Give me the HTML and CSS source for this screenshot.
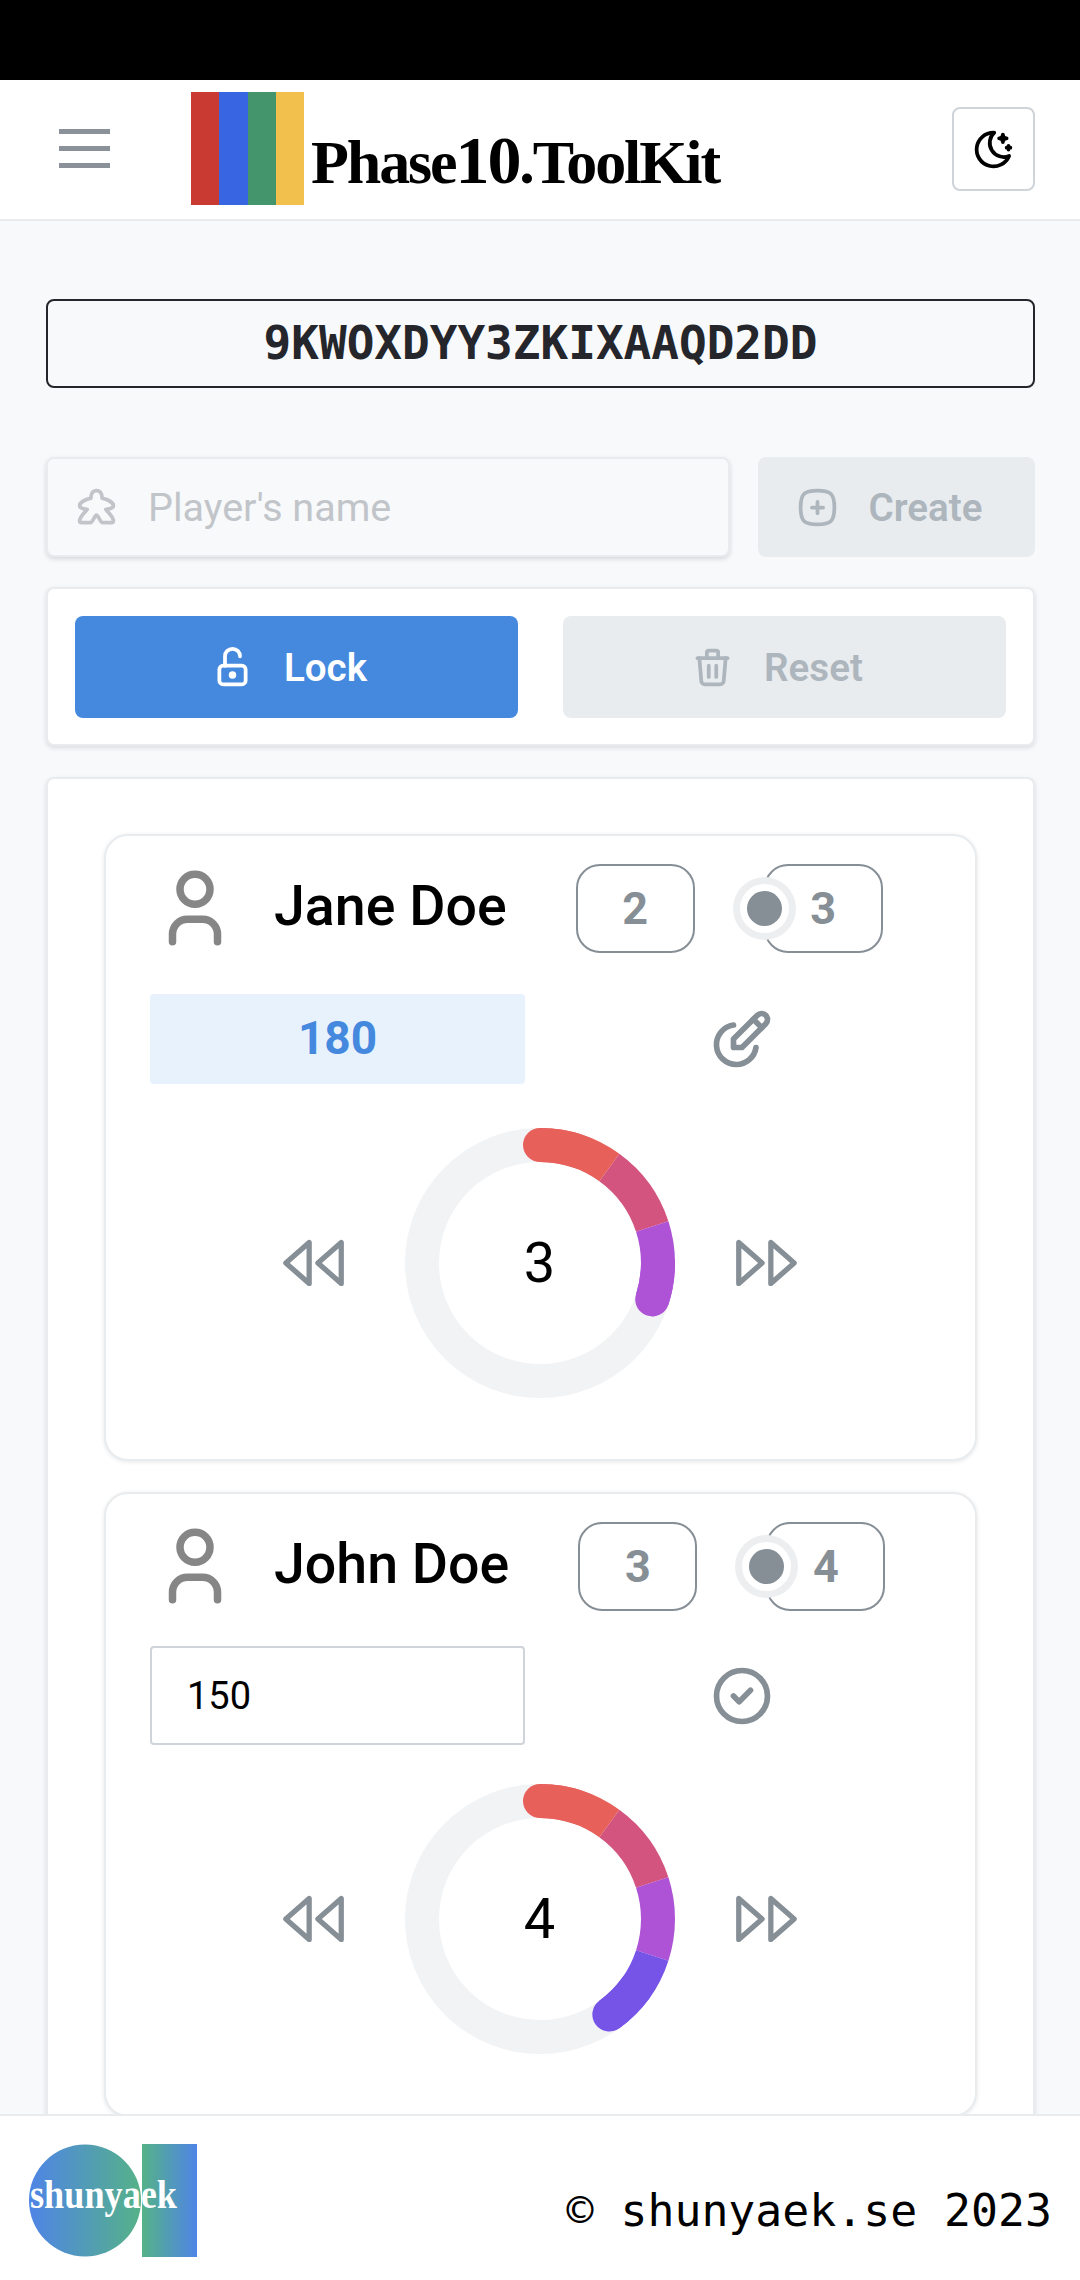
FILE: index.html
```html
<!DOCTYPE html>
<html lang="en">
<head>
    <meta charset="UTF-8">
    <meta name="viewport" content="width=device-width, initial-scale=1.0">
    <title>Phase10.ToolKit</title>
    <link rel="stylesheet" href="styles.css">
</head>
<body>
    <div class="statusbar"></div>

    <header class="header">
        <div class="burger"><span></span><span></span><span></span></div>
        <div class="logo">
            <div class="logo-bars"><i class="bar-red"></i><i class="bar-blue"></i><i class="bar-green"></i><i class="bar-yellow"></i></div>
            <div class="logo-text">Phase<b>10</b>.ToolKit</div>
        </div>
        <button class="theme-btn">
            <svg class="icon" width="45" height="45" viewBox="0 0 24 24"><path d="M12 3c.132 0 .263 0 .393 0a7.5 7.5 0 0 0 7.92 12.446a9 9 0 1 1 -8.313 -12.454z"/><path d="M17 4a2 2 0 0 0 2 2a2 2 0 0 0 -2 2a2 2 0 0 0 -2 -2a2 2 0 0 0 2 -2"/><path d="M19 11h2m-1 -1v2"/></svg>
        </button>
    </header>

    <main class="content">
        <div class="room-code">9KWOXDYY3ZKIXAAQD2DD</div>

        <div class="create-row">
            <label class="name-field">
                <svg class="icon" width="45" height="45" viewBox="0 0 24 24"><path d="M9 20h-5a1 1 0 0 1 -1 -1c0 -2 3.378 -4.907 4 -6c-1 0 -4 -.5 -4 -2c0 -2 4 -3.5 6 -4c0 -1.5 .5 -4 3 -4s3 2.5 3 4c2 .5 6 2 6 4c0 1.5 -3 2 -4 2c.622 1.093 4 4 4 6a1 1 0 0 1 -1 1h-5c-1 0 -2 -4 -3 -4s-2 4 -3 4z"/></svg>
                <input type="text" placeholder="Player's name">
            </label>
            <button class="btn btn-disabled btn-create">
                <svg class="icon" width="45" height="45" viewBox="0 0 24 24"><path d="M12 3c7.2 0 9 1.8 9 9s-1.8 9 -9 9s-9 -1.8 -9 -9s1.8 -9 9 -9z"/><path d="M15 12h-6"/><path d="M12 9v6"/></svg>
                Create
            </button>
        </div>

        <div class="panel actions">
            <button class="btn btn-primary">
                <svg class="icon" width="45" height="45" viewBox="0 0 24 24"><path d="M5 13a2 2 0 0 1 2 -2h10a2 2 0 0 1 2 2v6a2 2 0 0 1 -2 2h-10a2 2 0 0 1 -2 -2z"/><path d="M11 16a1 1 0 1 0 2 0a1 1 0 1 0 -2 0"/><path d="M8 11v-5a4 4 0 0 1 8 0"/></svg>
                Lock
            </button>
            <button class="btn btn-disabled">
                <svg class="icon" width="45" height="45" viewBox="0 0 24 24"><path d="M4 7h16"/><path d="M10 11v6"/><path d="M14 11v6"/><path d="M5 7l1 12a2 2 0 0 0 2 2h8a2 2 0 0 0 2 -2l1 -12"/><path d="M9 7v-3a1 1 0 0 1 1 -1h4a1 1 0 0 1 1 1v3"/></svg>
                Reset
            </button>
        </div>

        <section class="panel players">
            <article class="player">
                <div class="player-head">
                    <svg class="icon person" width="90" height="90" viewBox="0 0 24 24"><circle cx="12" cy="7" r="4"/><path d="M6 21v-2a4 4 0 0 1 4 -4h4a4 4 0 0 1 4 4v2"/></svg>
                    <div class="player-name">Jane Doe</div>
                    <div class="badge">2</div>
                    <div class="badge badge-active">3<span class="dot"></span></div>
                </div>
                <div class="score-row score-row-tall">
                    <div class="score">180</div>
                    <div class="score-action">
                        <svg class="icon" width="68" height="68" viewBox="0 0 24 24"><path d="M12 15l8.385 -8.415a2.1 2.1 0 0 0 -2.97 -2.97l-8.415 8.385v3h3z"/><path d="M16 5l3 3"/><path d="M9 7.07a7 7 0 0 0 1 13.93a7 7 0 0 0 6.929 -6"/></svg>
                    </div>
                </div>
                <div class="phase-row">
                    <svg class="icon arrow" width="70" height="70" viewBox="0 0 24 24"><path d="M21 5v14l-8 -7z"/><path d="M10 5v14l-8 -7z"/></svg>
                    <div class="ring">
                        <svg width="270" height="270" viewBox="0 0 270 270">
                            <g transform="rotate(-90 135 135)" fill="none" stroke-width="34">
                                <circle class="ring-track" cx="135" cy="135" r="118"/>
                                <circle class="seg-red cap" cx="135" cy="135" r="118" pathLength="360" stroke-dasharray="20 340"/>
                                <circle class="seg-pink" cx="135" cy="135" r="118" pathLength="360" stroke-dasharray="36 324" stroke-dashoffset="-36"/>
                                <circle class="seg-red" cx="135" cy="135" r="118" pathLength="360" stroke-dasharray="36 324"/>
                                <circle class="seg-grape" cx="135" cy="135" r="118" pathLength="360" stroke-dasharray="36 324" stroke-dashoffset="-72"/>
                                <circle class="seg-grape cap" cx="135" cy="135" r="118" pathLength="360" stroke-dasharray="18 342" stroke-dashoffset="-90"/>
                            </g>
                        </svg>
                        <span class="ring-label">3</span>
                    </div>
                    <svg class="icon arrow" width="70" height="70" viewBox="0 0 24 24"><path d="M3 5v14l8 -7z"/><path d="M14 5v14l8 -7z"/></svg>
                </div>
            </article>

            <article class="player">
                <div class="player-head">
                    <svg class="icon person" width="90" height="90" viewBox="0 0 24 24"><circle cx="12" cy="7" r="4"/><path d="M6 21v-2a4 4 0 0 1 4 -4h4a4 4 0 0 1 4 4v2"/></svg>
                    <div class="player-name">John Doe</div>
                    <div class="badge">3</div>
                    <div class="badge badge-active">4<span class="dot"></span></div>
                </div>
                <div class="score-row">
                    <input class="score-input" type="text" value="150">
                    <div class="score-action">
                        <svg class="icon" width="68" height="68" viewBox="0 0 24 24"><circle cx="12" cy="12" r="9"/><path d="M9 12l2 2l4 -4"/></svg>
                    </div>
                </div>
                <div class="phase-row">
                    <svg class="icon arrow" width="70" height="70" viewBox="0 0 24 24"><path d="M21 5v14l-8 -7z"/><path d="M10 5v14l-8 -7z"/></svg>
                    <div class="ring">
                        <svg width="270" height="270" viewBox="0 0 270 270">
                            <g transform="rotate(-90 135 135)" fill="none" stroke-width="34">
                                <circle class="ring-track" cx="135" cy="135" r="118"/>
                                <circle class="seg-red cap" cx="135" cy="135" r="118" pathLength="360" stroke-dasharray="20 340"/>
                                <circle class="seg-pink" cx="135" cy="135" r="118" pathLength="360" stroke-dasharray="36 324" stroke-dashoffset="-36"/>
                                <circle class="seg-red" cx="135" cy="135" r="118" pathLength="360" stroke-dasharray="36 324"/>
                                <circle class="seg-grape" cx="135" cy="135" r="118" pathLength="360" stroke-dasharray="36 324" stroke-dashoffset="-72"/>
                                <circle class="seg-violet" cx="135" cy="135" r="118" pathLength="360" stroke-dasharray="36 324" stroke-dashoffset="-108"/>
                                <circle class="seg-violet cap" cx="135" cy="135" r="118" pathLength="360" stroke-dasharray="18 342" stroke-dashoffset="-126"/>
                            </g>
                        </svg>
                        <span class="ring-label">4</span>
                    </div>
                    <svg class="icon arrow" width="70" height="70" viewBox="0 0 24 24"><path d="M3 5v14l8 -7z"/><path d="M14 5v14l8 -7z"/></svg>
                </div>
            </article>
        </section>
    </main>

    <footer class="footer">
        <svg class="footer-logo" width="168" height="113" viewBox="0 0 168 113">
            <defs>
                <linearGradient id="roundFill"><stop offset="0" stop-color="#4f84e6"/><stop offset="1" stop-color="#55b288"/></linearGradient>
                <linearGradient id="rectFill"><stop offset="0" stop-color="#55b288"/><stop offset="1" stop-color="#4f84e6"/></linearGradient>
            </defs>
            <circle cx="56" cy="56.5" r="56" fill="url(#roundFill)"/>
            <rect x="113" y="0" width="55" height="113" fill="url(#rectFill)"/>
            <text class="footer-logo-text" x="1" y="64" textLength="147" lengthAdjust="spacingAndGlyphs">shunyaek</text>
        </svg>
        <div class="copyright">© shunyaek.se 2023</div>
    </footer>
</body>
</html>
```

FILE: styles.css
```css
* {
    box-sizing: border-box;
}
body {
    margin: 0;
    width: 1080px;
    height: 2280px;
    overflow: hidden;
    position: relative;
    background: #f8f9fa;
    font-family: Roboto, sans-serif;
    color: #000;
}
.icon {
    flex: none;
    fill: none;
    stroke: currentColor;
    stroke-width: 2;
    stroke-linecap: round;
    stroke-linejoin: round;
}
.statusbar {
    height: 80px;
    background: #000;
}
.header {
    height: 141px;
    display: flex;
    align-items: center;
    padding: 0 45px 0 59px;
    background: #fff;
    border-bottom: 2px solid #e9ecef;
}
.burger {
    width: 51px;
    display: flex;
    flex-direction: column;
    gap: 12.5px;
    margin-top: -2px;
}
.burger span {
    height: 4.5px;
    background: #8a9199;
}
.logo {
    display: flex;
    margin-left: 81px;
    margin-top: -3px;
}
.logo-bars {
    display: flex;
    height: 113px;
}
.logo-bars i {
    width: 28.25px;
}
.bar-red { background: #c93a33; }
.bar-blue { background: #3866e2; }
.bar-green { background: #45956c; }
.bar-yellow { background: #f2c04c; }
.logo-text {
    margin-left: 7px;
    margin-top: 33px;
    font-family: "Liberation Serif", serif;
    font-size: 62px;
    line-height: 70px;
    font-weight: 700;
    letter-spacing: -2.1px;
}
.logo-text b {
    font-size: 68px;
    font-weight: 700;
}
.theme-btn {
    margin-left: auto;
    width: 83px;
    height: 84px;
    display: flex;
    align-items: center;
    justify-content: center;
    padding: 0;
    background: #fff;
    color: #000;
    border: 2px solid #ced4da;
    border-radius: 8px;
    margin-top: -1px;
}
.content {
    padding: 78px 45px 0 46px;
}
.room-code {
    height: 89px;
    border: 2px solid #25262b;
    border-radius: 8px;
    font-family: "DejaVu Sans Mono", monospace;
    font-size: 46px;
    font-weight: 700;
    line-height: 85px;
    text-align: center;
    color: #25262b;
}
.create-row {
    display: flex;
    gap: 28px;
    margin-top: 69px;
    height: 100px;
}
.name-field {
    flex: 1;
    display: flex;
    align-items: center;
    gap: 29px;
    padding-left: 26px;
    background: #f8f9fa;
    border: 2px solid #e9ecef;
    border-radius: 8px;
    box-shadow: 0 2px 5px rgba(0, 0, 0, 0.14);
    color: #c1c5ca;
}
.name-field input {
    flex: 1;
    min-width: 0;
    border: 0;
    padding: 0;
    background: transparent;
    font-family: Roboto, sans-serif;
    font-size: 39.5px;
}
.name-field input::placeholder {
    color: #c1c5ca;
    opacity: 1;
}
.btn {
    display: flex;
    align-items: center;
    justify-content: center;
    gap: 29px;
    border: 0;
    border-radius: 8px;
    padding: 0 16px 0 0;
    font-family: Roboto, sans-serif;
    font-size: 38.6px;
    font-weight: 600;
}
.btn-primary {
    background: #4589df;
    color: #fff;
}
.btn-disabled {
    background: #e9ecef;
    color: #adb5bd;
}
.btn-create {
    width: 277px;
}
.panel {
    background: #fff;
    border: 2px solid #e9ecef;
    border-radius: 8px;
    box-shadow: 0 2px 5px rgba(0, 0, 0, 0.12);
}
.actions {
    display: grid;
    grid-template-columns: 1fr 1fr;
    gap: 45px;
    height: 159px;
    margin-top: 30px;
    padding: 27px 27px 0;
}
.actions .btn {
    height: 102px;
}
.players {
    margin-top: 31px;
    padding: 55px 56px 0;
    display: flex;
    flex-direction: column;
    gap: 31px;
    height: 1600px;
}
.player {
    background: #fff;
    border: 2px solid #e9ecef;
    border-radius: 24px;
    padding: 28px 44px 61px;
    box-shadow: 0 1px 4px rgba(0, 0, 0, 0.1);
}
.player-head {
    display: flex;
    align-items: center;
    height: 88px;
}
.person {
    color: #868686;
}
.player-name {
    margin-left: 34px;
    margin-right: 69px;
    margin-top: -3px;
    font-size: 55.5px;
    font-weight: 500;
    white-space: nowrap;
}
.badge {
    position: relative;
    flex: none;
    width: 119px;
    height: 89px;
    border: 2px solid #868e96;
    border-radius: 24px;
    font-size: 45px;
    font-weight: 700;
    line-height: 85px;
    text-align: center;
    color: #868e96;
}
.badge-active {
    margin-left: 69px;
}
.dot {
    position: absolute;
    left: -19px;
    top: 25px;
    width: 35px;
    height: 35px;
    border-radius: 50%;
    background: #868e96;
    box-shadow: 0 0 0 7px #fff, 0 0 0 14px #eceef0;
}
.score-row {
    display: grid;
    grid-template-columns: 375px 375px;
    column-gap: 30px;
    align-items: center;
    height: 99px;
    margin-top: 36px;
}
.score-row-tall {
    height: 101px;
}
.score {
    height: 90px;
    background: #e8f2fd;
    border-radius: 4px;
    font-size: 46px;
    font-weight: 700;
    line-height: 88px;
    text-align: center;
    color: #4589df;
}
.score-input {
    width: 375px;
    height: 99px;
    padding: 0 35px;
    background: #fff;
    border: 2px solid #ced4da;
    border-radius: 4px;
    font-family: Roboto, sans-serif;
    font-size: 38px;
    color: #000;
}
.score-action {
    display: flex;
    justify-content: center;
    padding-right: 2px;
    color: #868e96;
}
.phase-row {
    display: flex;
    align-items: center;
    justify-content: center;
    gap: 55px;
    margin: 39px 2px 0 0;
}
.arrow {
    stroke-width: 1.8;
    color: #868e96;
}
.ring {
    position: relative;
    width: 270px;
    height: 270px;
}
.ring svg {
    display: block;
}
.ring-track { stroke: #f1f3f5; }
.seg-red { stroke: #e8605a; }
.seg-pink { stroke: #d45480; }
.seg-grape { stroke: #ae52d6; }
.seg-violet { stroke: #7654e8; }
.cap { stroke-linecap: round; }
.ring-label {
    position: absolute;
    inset: 0;
    display: flex;
    align-items: center;
    justify-content: center;
    font-size: 56px;
    font-weight: 400;
}
.footer {
    position: absolute;
    left: 0;
    right: 0;
    bottom: 0;
    height: 166px;
    display: flex;
    align-items: center;
    justify-content: space-between;
    padding: 5px 28px 0 29px;
    background: #fff;
    border-top: 2px solid #e9ecef;
}
.footer-logo-text {
    font-family: "Liberation Serif", serif;
    font-size: 40px;
    font-weight: 700;
    fill: #fff;
}
.copyright {
    margin-top: 20px;
    font-family: "DejaVu Sans Mono", monospace;
    font-size: 44.8px;
    white-space: nowrap;
}
```
